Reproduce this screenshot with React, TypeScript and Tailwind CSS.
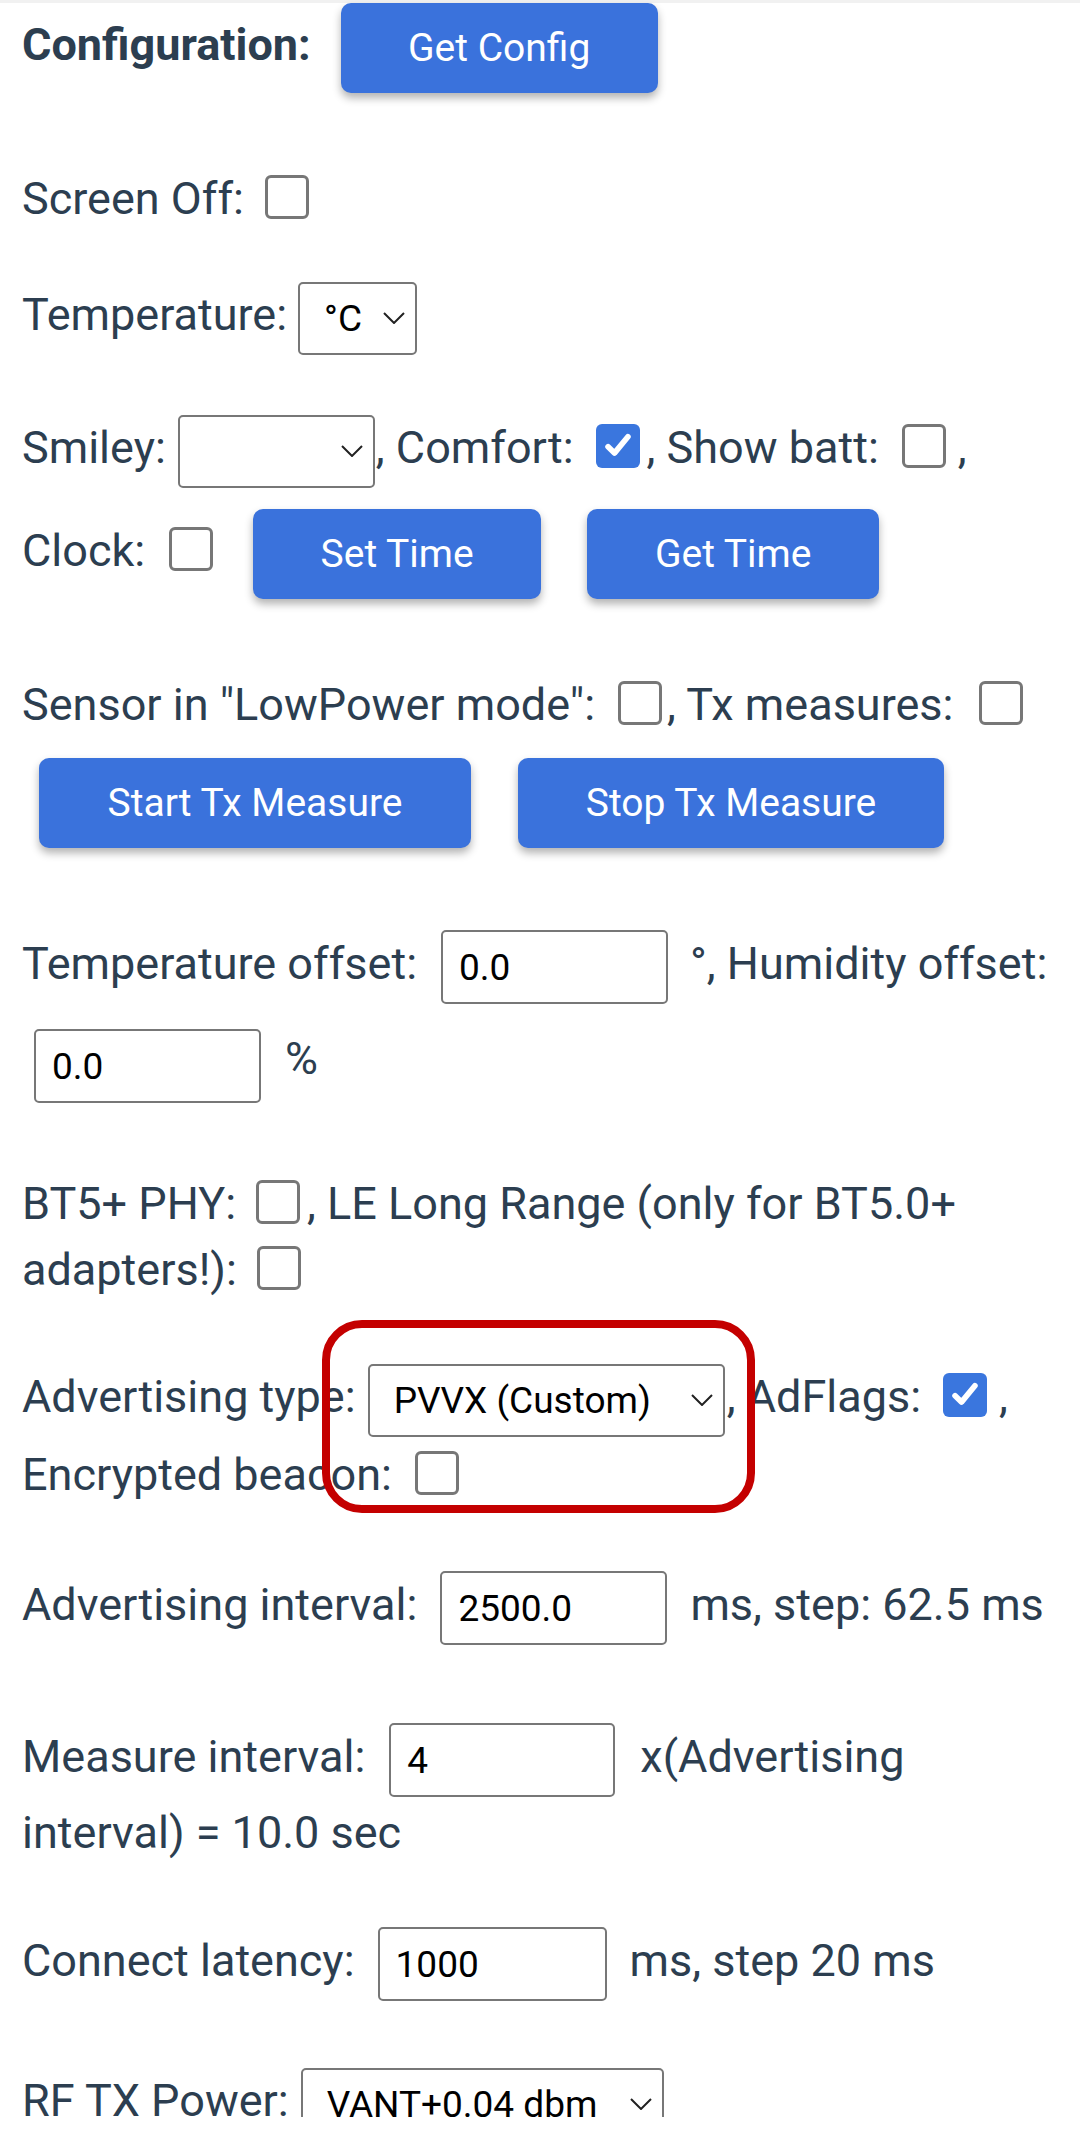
import React from "react";

const ink = "text-[#2c3e50]";

function Check({ on = false, className = "" }: { on?: boolean; className?: string }) {
  if (on) {
    return (
      <span
        className={`-mt-[10px] inline-flex h-[44px] w-[44px] shrink-0 items-center justify-center rounded-[6px] bg-[#3a76de] ${className}`}
      >
        <svg viewBox="0 0 24 24" className="h-[34px] w-[34px]" fill="none" stroke="white" strokeWidth="4" strokeLinecap="round" strokeLinejoin="round">
          <path d="M5 12.5l4.5 4.5L19 5.5" />
        </svg>
      </span>
    );
  }
  return <span className={`-mt-[10px] inline-block h-[44px] w-[44px] shrink-0 rounded-[6px] border-[3px] border-[#777] bg-white ${className}`} />;
}

function Field({ value, className = "" }: { value: string; className?: string }) {
  return (
    <div
      className={`flex h-[74px] shrink-0 items-center rounded-[5px] border-2 border-[#777] bg-white pl-[16px] text-[37px] text-black ${className}`}
    >
      {value}
    </div>
  );
}

function Select({ value, className = "" }: { value: string; className?: string }) {
  return (
    <div
      className={`flex h-[73px] shrink-0 items-center justify-between rounded-[5px] border-2 border-[#777] bg-white pl-[24px] pr-[10px] text-[37px] text-black ${className}`}
    >
      <span>{value}</span>
      <svg viewBox="0 0 22 12" className="h-[12px] w-[22px]" fill="none" stroke="#222" strokeWidth="2">
        <path d="M1 1l10 10L21 1" />
      </svg>
    </div>
  );
}

function Btn({ label, className = "" }: { label: string; className?: string }) {
  return (
    <button
      className={`h-[90px] shrink-0 rounded-[10px] bg-[#3a72dc] text-[39px] text-white shadow-[0_5px_8px_rgba(0,0,0,0.3)] ${className}`}
    >
      {label}
    </button>
  );
}

// labels sit a few px above the control centre line
const T = ({ className = "", children }: { className?: string; children: React.ReactNode }) => (
  <span className={`mb-[8px] ${className}`}>{children}</span>
);

const Row = ({ className = "", children }: { className?: string; children: React.ReactNode }) => (
  <div className={`flex items-center whitespace-nowrap ${className}`}>{children}</div>
);

export default function App() {
  return (
    <div className={`relative h-[2117px] overflow-hidden bg-white font-['Roboto',sans-serif] text-[45px] leading-none ${ink}`}>
      <div className="h-[3px] bg-[#f1f1f1]" />
      <div className="pl-[22px]">
        <Row className="h-[90px]">
          <T className="font-bold">Configuration:</T>
          <Btn label="Get Config" className="ml-[30px] w-[317px]" />
        </Row>

        <Row className="mt-[72px] h-[74px]">
          <T>Screen Off:</T>
          <Check className="ml-[21px]" />
        </Row>

        <Row className="mt-[42px] h-[74px]">
          <T>Temperature:</T>
          <Select value="°C" className="ml-[11px] w-[119px]" />
        </Row>

        <Row className="mt-[59px] h-[74px]">
          <T>Smiley:</T>
          <Select value="" className="ml-[12px] w-[197px]" />
          <T className="ml-[1px]">, Comfort:</T>
          <Check on className="ml-[22px]" />
          <T className="ml-[7px]">, Show batt:</T>
          <Check className="ml-[23px]" />
          <T className="ml-[12px]">,</T>
        </Row>

        <Row className="mt-[21px] h-[90px]">
          <T>Clock:</T>
          <Check className="ml-[24px]" />
          <Btn label="Set Time" className="ml-[40px] w-[288px]" />
          <Btn label="Get Time" className="ml-[46px] w-[292px]" />
        </Row>

        <Row className="mt-[72px] h-[74px]">
          <T>Sensor in "LowPower mode":</T>
          <Check className="ml-[23px]" />
          <T className="ml-[5px]">, Tx measures:</T>
          <Check className="ml-[26px]" />
        </Row>

        <Row className="mt-[13px] h-[90px]">
          <Btn label="Start Tx Measure" className="ml-[17px] w-[432px]" />
          <Btn label="Stop Tx Measure" className="ml-[47px] w-[426px]" />
        </Row>

        <Row className="mt-[82px] h-[74px]">
          <T>Temperature offset:</T>
          <Field value="0.0" className="ml-[24px] w-[227px]" />
          <T className="ml-[22px]">°, Humidity offset:</T>
        </Row>

        <Row className="mt-[25px] h-[74px]">
          <Field value="0.0" className="ml-[12px] w-[227px]" />
          <T className="ml-[24px] mb-[16px]">%</T>
        </Row>

        <Row className="mt-[71px] h-[66px]">
          <T>BT5+ PHY:</T>
          <Check className="ml-[20px]" />
          <T className="ml-[7px]">, LE Long Range (only for BT5.0+</T>
        </Row>

        <Row className="h-[66px]">
          <T>adapters!):</T>
          <Check className="ml-[20px]" />
        </Row>

        <Row className="mt-[57px] h-[74px]">
          <T>Advertising type:</T>
          <Select value="PVVX (Custom)" className="ml-[12px] w-[357px]" />
          <T className="ml-[2px]">, AdFlags:</T>
          <Check on className="ml-[22px]" />
          <T className="ml-[12px]">,</T>
        </Row>

        <Row className="mt-[8px] h-[66px]">
          <T>Encrypted beacon:</T>
          <Check className="ml-[23px]" />
        </Row>

        <Row className="mt-[60px] h-[74px]">
          <T>Advertising interval:</T>
          <Field value="2500.0" className="ml-[23px] w-[227px]" />
          <T className="ml-[23px]">ms, step: 62.5 ms</T>
        </Row>

        <Row className="mt-[78px] h-[74px]">
          <T>Measure interval:</T>
          <Field value="4" className="ml-[24px] w-[226px]" />
          <T className="ml-[25px]">x(Advertising</T>
        </Row>

        <Row className="mt-[6px] h-[66px]">
          <T>interval) = 10.0 sec</T>
        </Row>

        <Row className="mt-[58px] h-[74px]">
          <T>Connect latency:</T>
          <Field value="1000" className="ml-[23px] w-[229px]" />
          <T className="ml-[23px]">ms, step 20 ms</T>
        </Row>

        <Row className="mt-[66px] h-[74px]">
          <T>RF TX Power:</T>
          <Select value="VANT+0.04 dbm" className="ml-[12px] w-[363px]" />
        </Row>
      </div>

      <div className="pointer-events-none absolute left-[322px] top-[1320px] h-[193px] w-[433px] rounded-[40px] border-[8px] border-[#c40000]" />
    </div>
  );
}
